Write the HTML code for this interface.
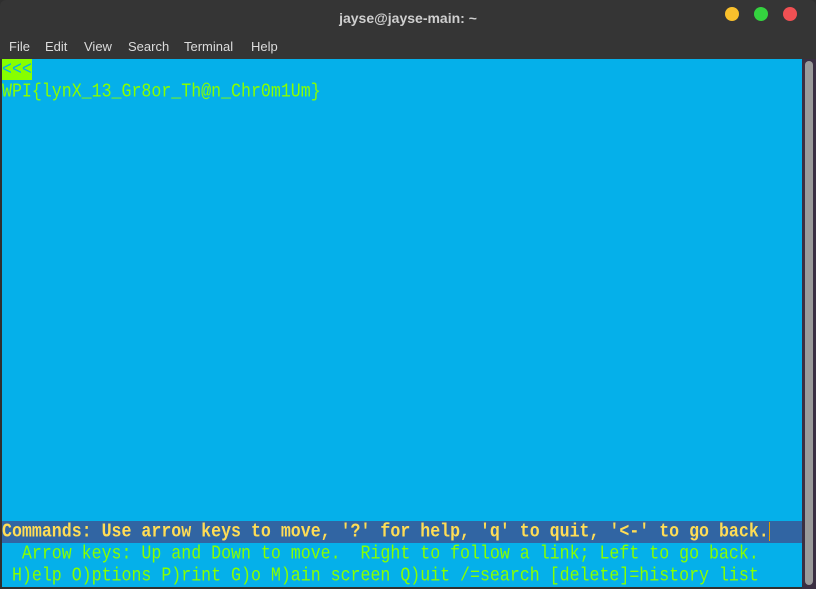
<!DOCTYPE html>
<html><head><meta charset="utf-8"><style>
*{margin:0;padding:0;box-sizing:border-box}
body{width:816px;height:589px;background:#2f2f2f;overflow:hidden;position:relative;font-family:"Liberation Sans",sans-serif}
.title{position:absolute;left:0;top:0;width:816px;height:34px;background:#353535;border-radius:6px 6px 0 0;color:#cfcfcf;font-size:14px;font-weight:bold;text-align:center;line-height:36px}
.dot{position:absolute;top:7px;width:14px;height:14px;border-radius:50%}
.menu{position:absolute;left:0;top:34px;width:816px;height:25px;background:#353535;color:#dcdcdc;font-size:13px}
.menu span{position:absolute;top:5px}
.term{position:absolute;left:2px;top:59px;width:800px;height:528px;background:#05b0ea;font-family:"Liberation Mono",monospace;font-size:16.6px;color:#87ff00}
.row{position:absolute;left:0;height:22px;line-height:22px;white-space:pre;width:800px}
.row .t{display:inline-block;transform:scaleY(1.15);transform-origin:50% 60%}
.sb{position:absolute;left:802px;top:59px;width:14px;height:530px;background:#3a2f42}
.thumb{position:absolute;left:805px;top:61px;width:8px;height:524px;background:#9a9a9a;border-radius:4px}
</style></head><body>
<div class="title">jayse@jayse-main: ~
<div class="dot" style="left:725px;background:#f9c02c"></div>
<div class="dot" style="left:754px;background:#34d23f"></div>
<div class="dot" style="left:783px;background:#f05053"></div>
</div>
<div class="menu"><span style="left:9px">File</span><span style="left:45px">Edit</span><span style="left:84px">View</span><span style="left:128px">Search</span><span style="left:184px">Terminal</span><span style="left:251px">Help</span></div>
<div class="term">
<div style="position:absolute;left:0;top:0;width:30px;height:21px;background:#87ff00"></div>
<div class="row" style="top:0;color:#05b0ea"><span class="t">&lt;&lt;&lt;</span></div>
<div class="row" style="top:22px"><span class="t">WPI{lynX_13_Gr8or_Th@n_Chr0m1Um}</span></div>
<div class="row" style="top:462px;background:#3165a3;color:#ffdd55;font-weight:bold"><span class="t">Commands: Use arrow keys to move, '?' for help, 'q' to quit, '&lt;-' to go back.</span><span style="border-left:1px solid #e0a000"></span></div>
<div class="row" style="top:484px"><span class="t">  Arrow keys: Up and Down to move.  Right to follow a link; Left to go back.</span></div>
<div class="row" style="top:506px"><span class="t"> H)elp O)ptions P)rint G)o M)ain screen Q)uit /=search [delete]=history list</span></div>
</div>
<div class="sb"></div><div class="thumb"></div>
</body></html>
